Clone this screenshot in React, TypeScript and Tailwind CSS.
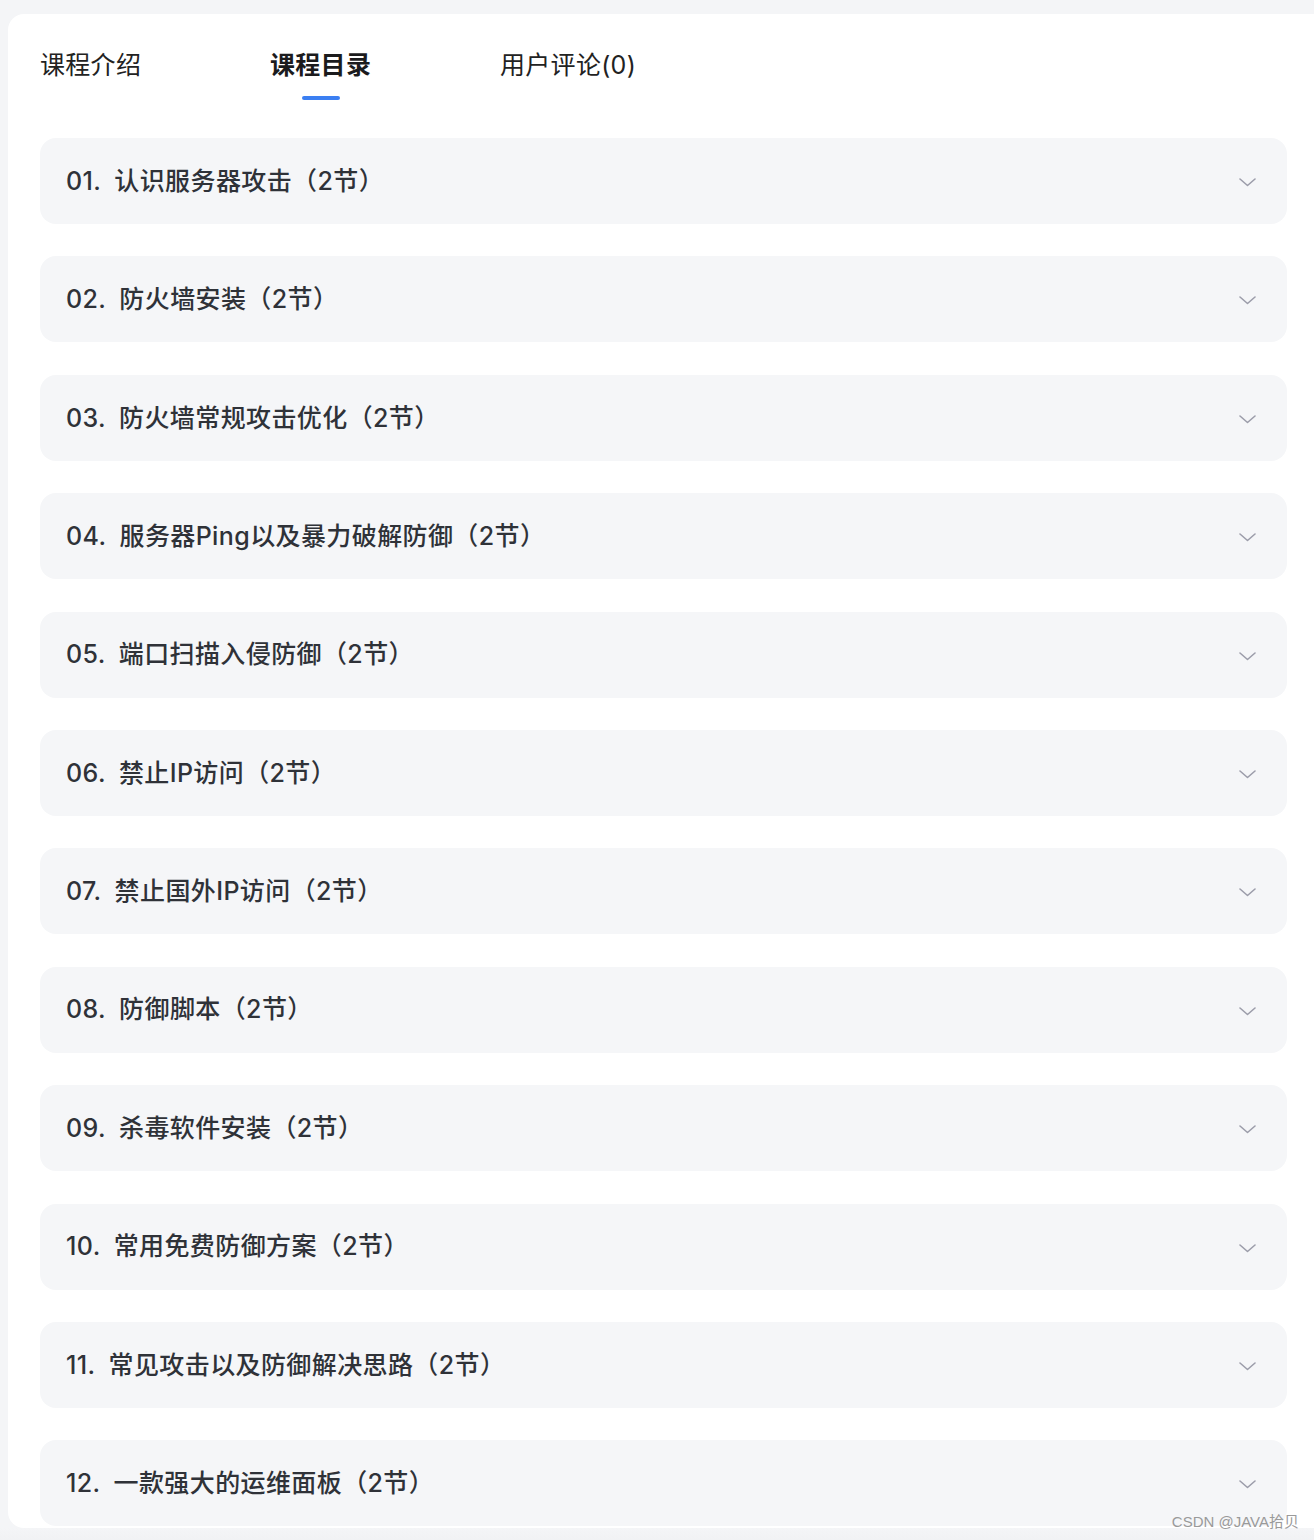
import React from "react";

const items = [
  ["01.", "认识服务器攻击（2节）"],
  ["02.", "防火墙安装（2节）"],
  ["03.", "防火墙常规攻击优化（2节）"],
  ["04.", "服务器Ping以及暴力破解防御（2节）"],
  ["05.", "端口扫描入侵防御（2节）"],
  ["06.", "禁止IP访问（2节）"],
  ["07.", "禁止国外IP访问（2节）"],
  ["08.", "防御脚本（2节）"],
  ["09.", "杀毒软件安装（2节）"],
  ["10.", "常用免费防御方案（2节）"],
  ["11.", "常见攻击以及防御解决思路（2节）"],
  ["12.", "一款强大的运维面板（2节）"],
];

const font = { fontFamily: 'Inter, "Noto Sans CJK SC", sans-serif' };

export default function App() {
  return (
    <div className="relative w-[1314px] h-[1540px] overflow-hidden bg-[#f4f5f7]" style={font}>
      <div className="ml-2 mt-[14px] w-[1330px] rounded-2xl bg-white pl-8 pb-[2px]">
        <div className="flex pt-[34px]">
          <div className="w-[230px] flex">
            <div className="flex flex-col items-center">
              <span className="text-[25px] leading-[34px] tracking-[0.3px] text-[#222]">课程介绍</span>
            </div>
          </div>
          <div className="w-[230px] flex">
            <div className="flex flex-col items-center">
              <span className="text-[25px] leading-[34px] tracking-[0.3px] font-bold text-[#1b1b1d]">课程目录</span>
              <span className="mt-[14px] h-[4px] w-[38px] rounded-full bg-[#3b7ff2]" />
            </div>
          </div>
          <div className="w-[230px] flex">
            <span className="text-[25px] leading-[34px] tracking-[0.3px] text-[#222]">用户评论(0)</span>
          </div>
        </div>
        <div className="mt-[38px] flex flex-col gap-[32.4px]">
          {items.map(([n, t]) => (
            <div
              key={n}
              className="flex h-[86px] w-[1247px] items-center justify-between rounded-2xl bg-[#f5f6f8] pl-[26px] pr-[31px]"
            >
              <span className="mt-[1px] text-[25px] font-medium tracking-[0.4px] text-[#2f3238]">
                {n}
                <span className="ml-[13px]">{t}</span>
              </span>
              <svg className="mt-[3px]" width="17" height="9" viewBox="0 0 17 9" fill="none">
                <path d="M1 1l7.5 6.5L16 1" stroke="#9c9daa" strokeWidth="1.6" strokeLinecap="round" strokeLinejoin="round" />
              </svg>
            </div>
          ))}
        </div>
      </div>
      <div className="absolute bottom-0 left-0 right-0 h-[12px] bg-gradient-to-b from-white/0 to-[#f1f2f4]" />
      <div
        className="absolute right-[15px] bottom-[9px] text-[15px] leading-[18px] text-[#9a9a9a]"
        style={{ fontFamily: '"Liberation Sans", "Noto Sans CJK SC", sans-serif' }}
      >
        CSDN @JAVA拾贝
      </div>
    </div>
  );
}
